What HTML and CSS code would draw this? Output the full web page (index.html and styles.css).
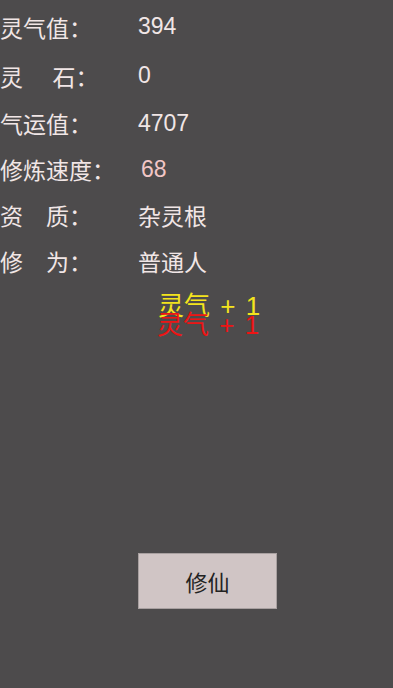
FILE: index.html
```html
<!DOCTYPE html>
<html lang="zh-CN">
<head>
<meta charset="utf-8">
<title>修仙</title>
<link rel="stylesheet" href="styles.css">
</head>
<body>
<main class="page">
  <section class="stats">
    <div class="row row-tall"><span class="label">灵气值：</span><span class="value">394</span></div>
    <div class="row row-tall"><span class="label">灵　 石：</span><span class="value">0</span></div>
    <div class="row"><span class="label">气运值：</span><span class="value">4707</span></div>
    <div class="row"><span class="label">修炼速度：</span><span class="value value-speed">68</span></div>
    <div class="row"><span class="label">资　质：</span><span class="value">杂灵根</span></div>
    <div class="row"><span class="label">修　为：</span><span class="value">普通人</span></div>
  </section>
  <div class="float float-yellow">灵气 + 1</div>
  <div class="float float-red">灵气 + 1</div>
  <div class="actions">
    <button class="btn" type="button">修仙</button>
  </div>
</main>
</body>
</html>
```

FILE: styles.css
```css
html, body {
  margin: 0;
  padding: 0;
  background: #4d4b4c;
}
body {
  width: 393px;
  height: 688px;
  overflow: hidden;
  font-family: "Liberation Sans", "Noto Sans CJK SC", sans-serif;
  color: #f1e6e6;
}
.page {
  position: relative;
  height: 688px;
}
.stats {
  padding-top: 2px;
  display: flex;
  flex-direction: column;
}
.row {
  display: flex;
  align-items: center;
  height: 46px;
  font-size: 23px;
  white-space: pre;
}
.row-tall {
  height: 49px;
}
.label {
  width: 138px;
  flex: none;
}
.value-speed {
  color: #f2c6c6;
  padding-left: 3px;
}
.float {
  position: absolute;
  font-size: 26px;
  line-height: 26px;
  word-spacing: 3px;
  white-space: pre;
}
.float-yellow {
  left: 158px;
  top: 293px;
  color: #f4e41c;
}
.float-red {
  left: 157px;
  top: 312px;
  color: #ee1414;
}
.actions {
  margin-top: 269px;
  padding-left: 138px;
}
.btn {
  width: 139px;
  height: 56px;
  margin: 0;
  background: #d0c5c5;
  border: 1px solid #a8a0a0;
  color: #222;
  font-family: "Liberation Sans", "Noto Sans CJK SC", sans-serif;
  font-size: 22px;
  padding: 0;
}
```
